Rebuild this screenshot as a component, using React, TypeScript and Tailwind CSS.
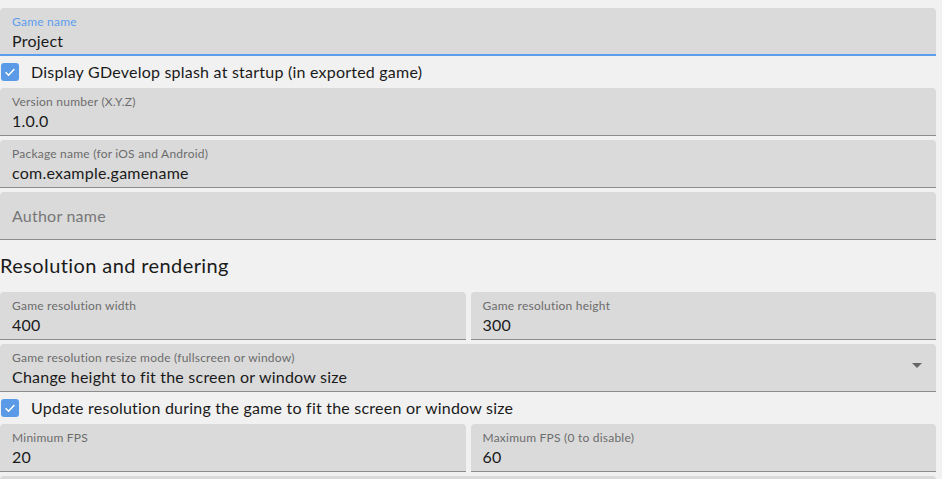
import React from "react";

interface IFieldProps {
  label?: string;
  value?: string;
  placeholder?: string;
  focused?: boolean;
  select?: boolean;
  className?: string;
}

function Field({ label, value, placeholder, focused, select, className }: IFieldProps) {
  return (
    <div
      className={
        "relative h-[48px] shrink-0 rounded-t-[4px] bg-[#dadada] px-3 " +
        (focused ? "border-b-2 border-[#5c9ded] " : "border-b border-[#8c8c8c] ") +
        (className || "")
      }
    >
      {placeholder ? (
        <div className="flex h-full items-center text-base text-[#777777]">{placeholder}</div>
      ) : (
        <div className="pt-[6px]">
          <div className={"text-xs leading-4 " + (focused ? "text-[#5c9ded]" : "text-[#6c6c6c]")}>{label}</div>
          <div className="text-base leading-[22px] text-[#1a1a1a]">{value}</div>
        </div>
      )}
      {select && (
        <svg className="absolute right-[14px] top-[19px]" width="10" height="5" viewBox="0 0 10 5">
          <path d="M0 0 L10 0 L5 5 Z" fill="#666666" />
        </svg>
      )}
    </div>
  );
}

function Check({ label }: { label: string }) {
  return (
    <div className="flex h-[32px] shrink-0 items-center">
      <div className="ml-[1px] flex h-[18px] w-[18px] items-center justify-center rounded-[3px] bg-[#5b9ae6]">
        <svg width="14" height="14" viewBox="0 0 24 24">
          <path d="M4.5 12.5 L9.5 17.5 L19.5 7" stroke="#ffffff" strokeWidth="2.6" fill="none" />
        </svg>
      </div>
      <span className="ml-[12px] text-base text-[#1a1a1a]">{label}</span>
    </div>
  );
}

export default function App() {
  return (
    <div className="h-[479px] w-[942px] overflow-hidden bg-[#f1f1f1] pr-[6px] pt-[8px] font-['Lato',sans-serif] tracking-[0.014em]">
      <div className="flex flex-col">
        <Field label="Game name" value="Project" focused />
        <Check label="Display GDevelop splash at startup (in exported game)" />
        <Field label="Version number (X.Y.Z)" value="1.0.0" />
        <Field label="Package name (for iOS and Android)" value="com.example.gamename" className="mt-1" />
        <Field placeholder="Author name" className="mt-1" />
        <div className="flex h-[52px] shrink-0 items-center pb-[3px] text-xl tracking-[0.02em] text-[#1a1a1a]">
          Resolution and rendering
        </div>
        <div className="flex gap-[5px]">
          <Field label="Game resolution width" value="400" className="flex-1" />
          <Field label="Game resolution height" value="300" className="flex-1" />
        </div>
        <Field
          label="Game resolution resize mode (fullscreen or window)"
          value="Change height to fit the screen or window size"
          select
          className="mt-1"
        />
        <Check label="Update resolution during the game to fit the screen or window size" />
        <div className="flex gap-[5px]">
          <Field label="Minimum FPS" value="20" className="flex-1" />
          <Field label="Maximum FPS (0 to disable)" value="60" className="flex-1" />
        </div>
        <Field label="" value="" className="mt-1" />
      </div>
    </div>
  );
}
